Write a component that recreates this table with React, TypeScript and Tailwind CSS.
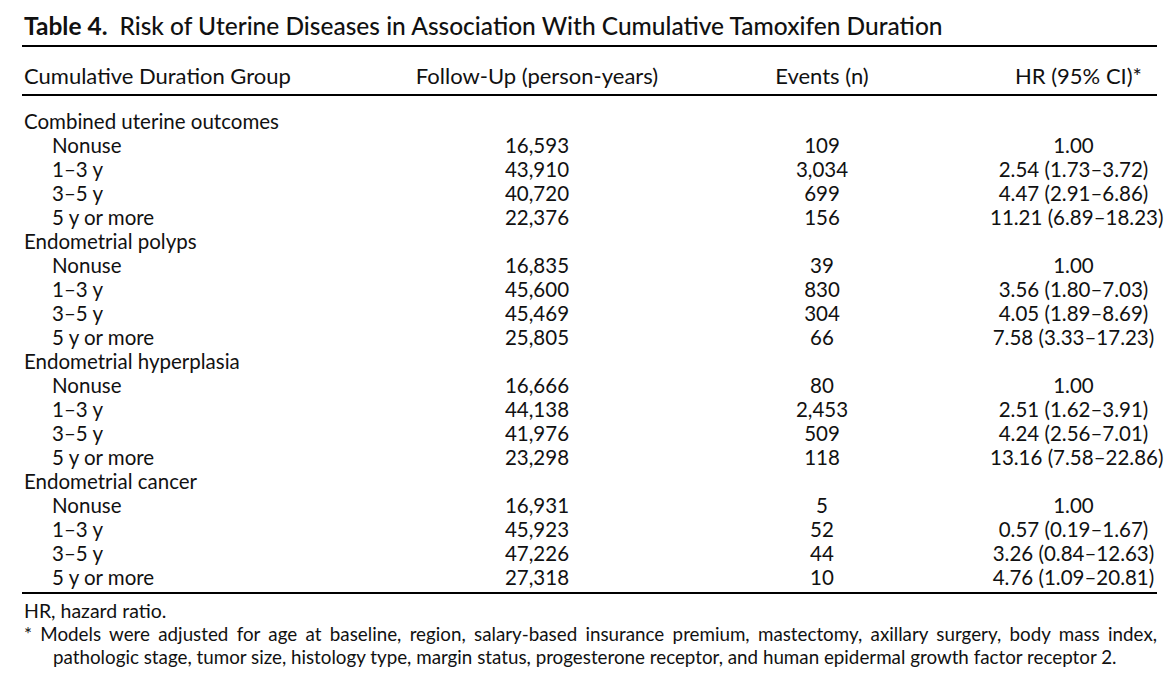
import React from 'react';

type Row = { label: string; sub?: boolean; fu?: string; ev?: string; hr?: string };

const groups: { name: string; rows: [string, string, string, string][] }[] = [
  {
    name: 'Combined uterine outcomes',
    rows: [
      ['Nonuse', '16,593', '109', '1.00'],
      ['1–3 y', '43,910', '3,034', '2.54 (1.73–3.72)'],
      ['3–5 y', '40,720', '699', '4.47 (2.91–6.86)'],
      ['5 y or more', '22,376', '156', '11.21 (6.89–18.23)'],
    ],
  },
  {
    name: 'Endometrial polyps',
    rows: [
      ['Nonuse', '16,835', '39', '1.00'],
      ['1–3 y', '45,600', '830', '3.56 (1.80–7.03)'],
      ['3–5 y', '45,469', '304', '4.05 (1.89–8.69)'],
      ['5 y or more', '25,805', '66', '7.58 (3.33–17.23)'],
    ],
  },
  {
    name: 'Endometrial hyperplasia',
    rows: [
      ['Nonuse', '16,666', '80', '1.00'],
      ['1–3 y', '44,138', '2,453', '2.51 (1.62–3.91)'],
      ['3–5 y', '41,976', '509', '4.24 (2.56–7.01)'],
      ['5 y or more', '23,298', '118', '13.16 (7.58–22.86)'],
    ],
  },
  {
    name: 'Endometrial cancer',
    rows: [
      ['Nonuse', '16,931', '5', '1.00'],
      ['1–3 y', '45,923', '52', '0.57 (0.19–1.67)'],
      ['3–5 y', '47,226', '44', '3.26 (0.84–12.63)'],
      ['5 y or more', '27,318', '10', '4.76 (1.09–20.81)'],
    ],
  },
];

const rows: Row[] = groups.flatMap((g) => [
  { label: g.name },
  ...g.rows.map(([label, fu, ev, hr]) => ({ label, sub: true, fu, ev, hr })),
]);

const cell = 'flex justify-center whitespace-nowrap';

export default function App() {
  return (
    <div
      className="w-[1173px] h-[680px] bg-white text-[#111] pl-[22px] pr-[16px]"
      style={{ fontFamily: 'Lato, "Open Sans", sans-serif' }}
    >
      {/* title */}
      <h1 className="pt-[11px] pl-[2px] h-[45px] text-[24.5px] leading-[30px] font-bold whitespace-nowrap">
        Table 4.&nbsp; <span className="font-medium">Risk of Uterine Diseases in Association With Cumulative Tamoxifen Duration</span>
      </h1>

      <div className="border-t-2 border-b-2 border-black">
        {/* header */}
        <div className="grid grid-cols-[378px_274px_296px_1fr] h-[49px] pt-[10px] items-center text-[22px] border-b-2 border-black">
          <div className="pl-[2px]">Cumulative Duration Group</div>
          <div className={cell}>Follow-Up (person-years)</div>
          <div className={cell}>Events (n)</div>
          <div className={`${cell} pl-[30px]`}>HR (95% CI)*</div>
        </div>

        {/* body */}
        <div className="pt-[13px] pb-[3px] text-[20.5px]">
          {rows.map((r, i) => (
            <div key={i} className="grid grid-cols-[378px_274px_296px_1fr] h-[24px] items-center leading-[24px]">
              <div className={r.sub ? 'pl-[30px]' : 'pl-[2px]'}>{r.label}</div>
              <div className={cell}>{r.fu}</div>
              <div className={cell}>{r.ev}</div>
              <div className={`${cell} pl-[20px]`}>{r.hr}</div>
            </div>
          ))}
        </div>
      </div>

      {/* footnotes */}
      <div className="pt-[5px] text-[18.8px] leading-[23px] pl-[2px]">
        <p className="text-[19.5px]">HR, hazard ratio.</p>
        <p className="pl-[29px] -indent-[29px] text-justify [text-align-last:left]">
          * Models were adjusted for age at baseline, region, salary-based insurance premium, mastectomy, axillary surgery, body mass index, pathologic stage, tumor size, histology type, margin status, progesterone receptor, and human epidermal growth factor receptor 2.
        </p>
      </div>
    </div>
  );
}
